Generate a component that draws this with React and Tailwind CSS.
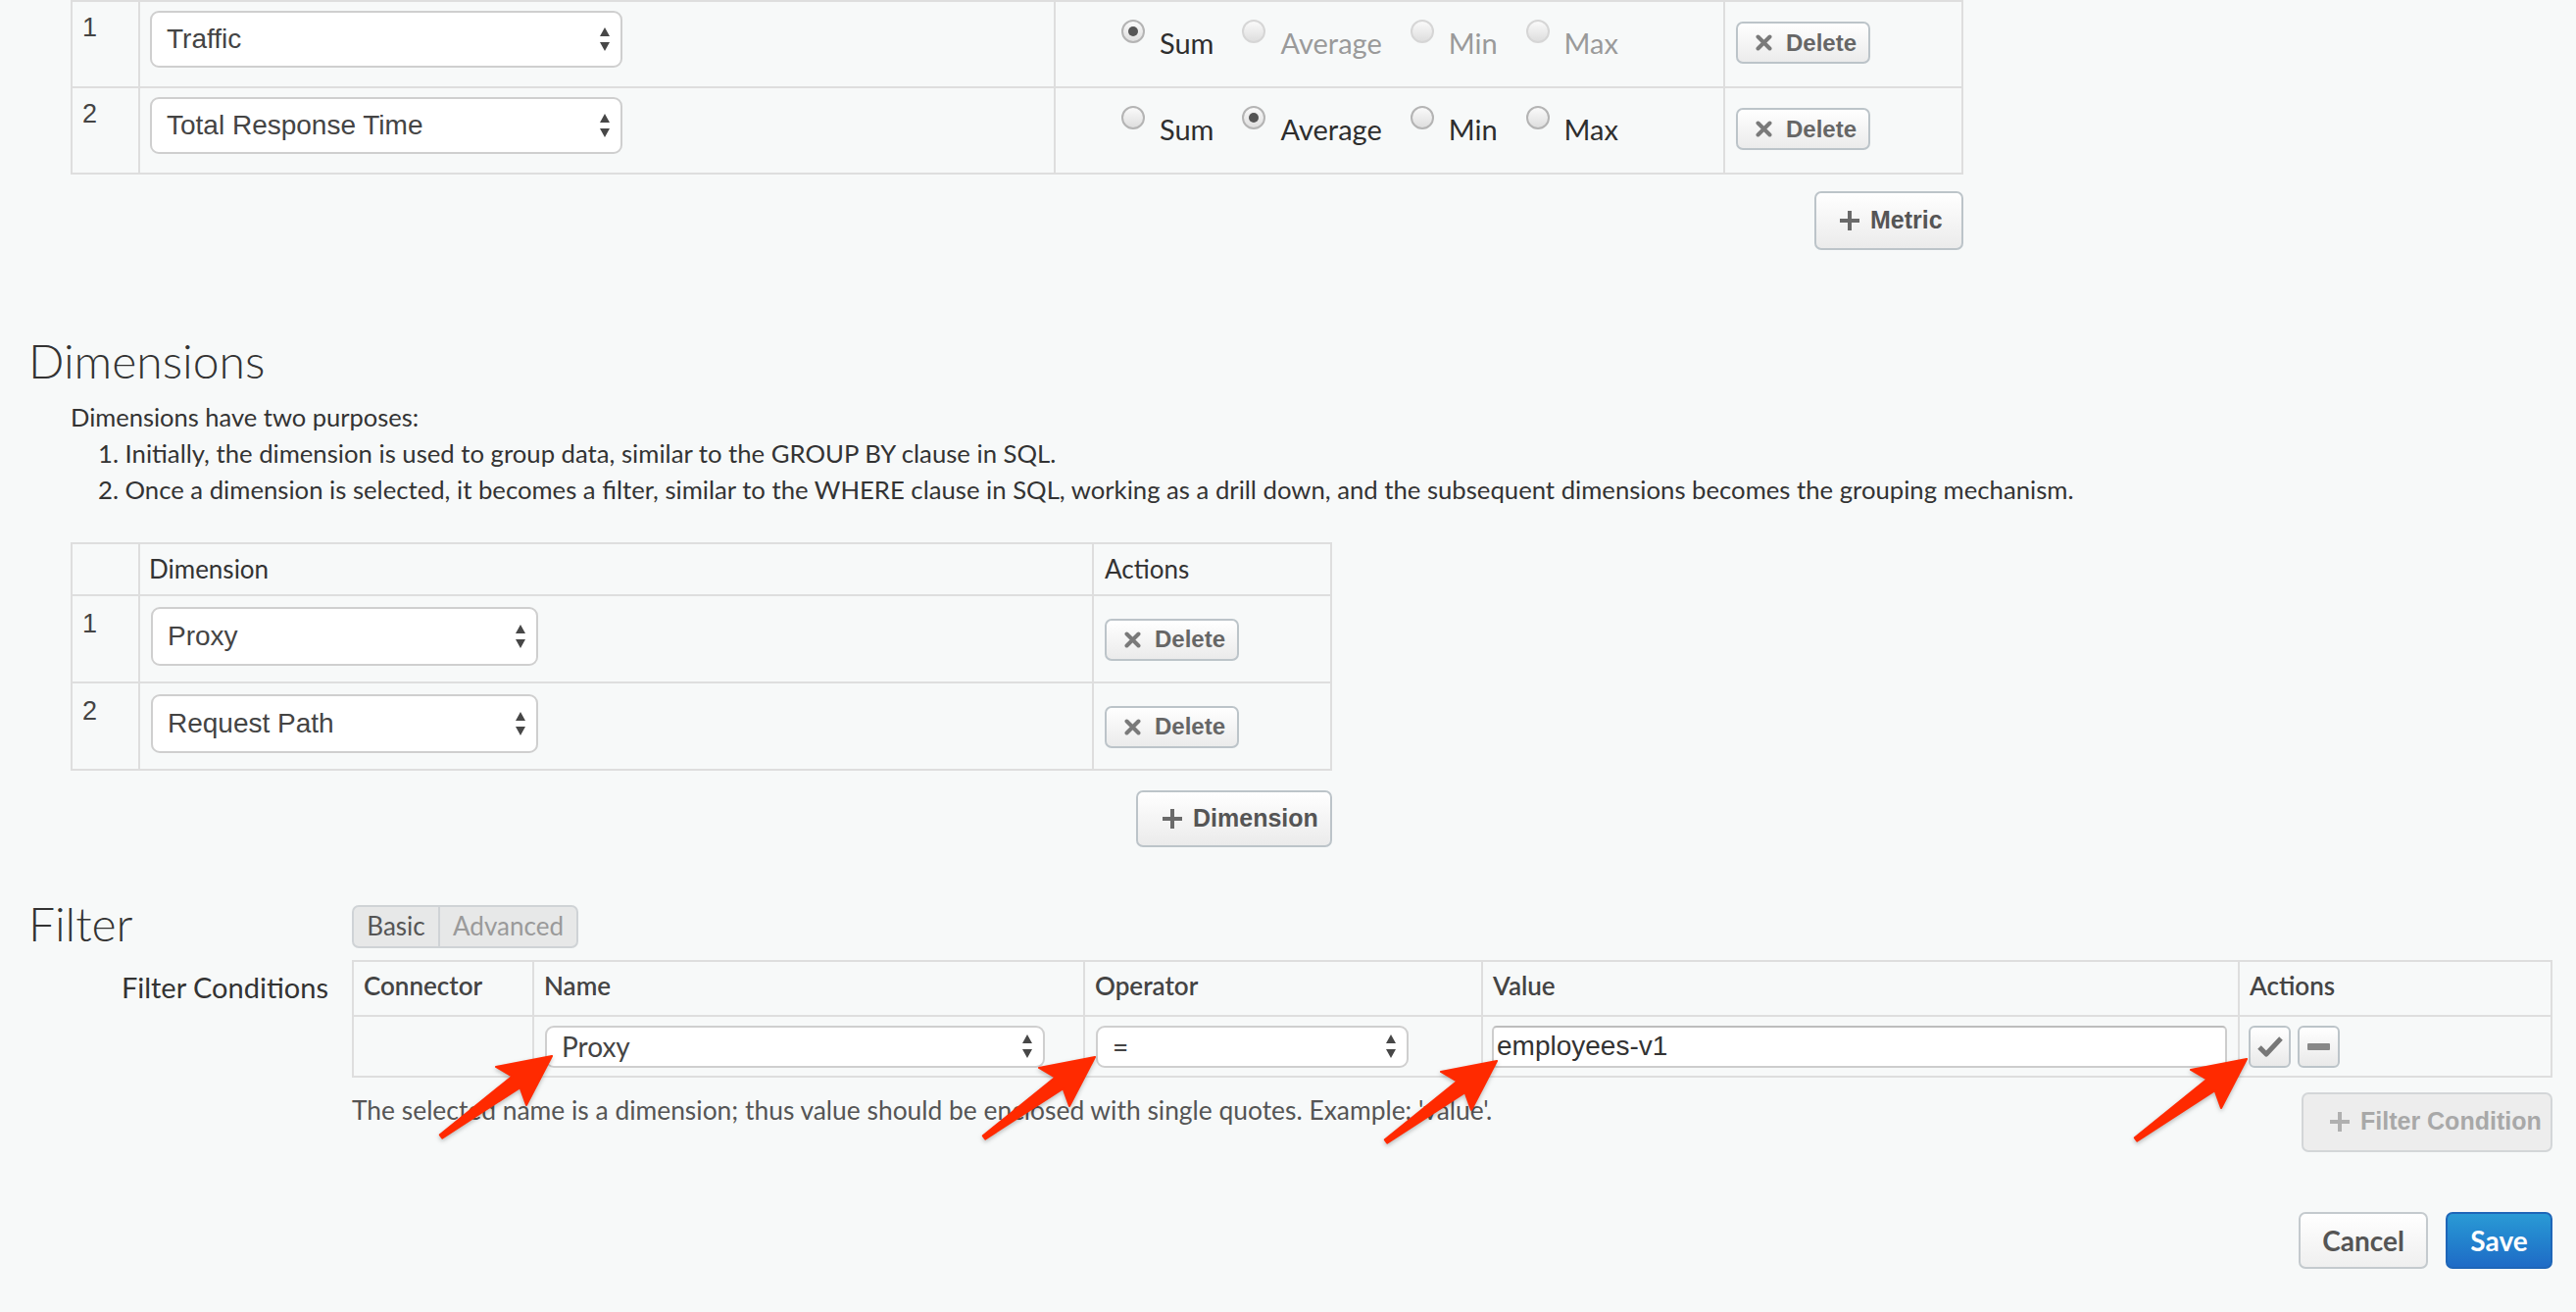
import React from "react";

function UpDown() {
  return (
    <svg width="12" height="26" viewBox="0 0 12 26" className="shrink-0">
      <path d="M6 1 L11 10 H1 Z M1 16 H11 L6 25 Z" fill="#474747" />
    </svg>
  );
}

function Select({ text, className, textClass }) {
  return (
    <div
      className={`flex items-center justify-between bg-white border-2 border-[#cfcfcf] rounded-[9px] pl-[15px] pr-[10px] ${className}`}
    >
      <span className={textClass}>{text}</span>
      <UpDown />
    </div>
  );
}

function XIcon() {
  return (
    <svg width="17" height="17" viewBox="0 0 17 17" className="shrink-0">
      <path d="M2.5 2.5 L14.5 14.5 M14.5 2.5 L2.5 14.5" stroke="#7a7a7a" strokeWidth="4" strokeLinecap="round" />
    </svg>
  );
}

function PlusIcon({ color = "#6a6a6a" }) {
  return (
    <svg width="22" height="22" viewBox="0 0 22 22" className="shrink-0">
      <path d="M11 1 V21 M1 11 H21" stroke={color} strokeWidth="4" />
    </svg>
  );
}

function DeleteBtn() {
  return (
    <button className="inline-flex items-center gap-[14px] w-[137px] h-[43px] pl-[18px] rounded-[7px] border-2 border-[#bcc4c9] bg-linear-to-b from-white to-[#ebebeb] text-[#666] font-['Liberation_Sans',Arial,sans-serif] font-bold text-[24px]">
      <XIcon />
      <span>Delete</span>
    </button>
  );
}

function Radio({ checked, disabled }) {
  return (
    <span
      className={`inline-flex shrink-0 w-[24px] h-[24px] rounded-full border-2 items-center justify-center bg-linear-to-b from-[#fafafa] to-[#dedede] ${
        disabled ? "border-[#d6d6d6]" : "border-[#b4b4b4]"
      }`}
    >
      {checked && <span className="w-[10px] h-[10px] rounded-full bg-[#555]" />}
    </span>
  );
}

function RadioGroup({ selected, disabledOthers }) {
  const items = ["Sum", "Average", "Min", "Max"];
  return (
    <div className="flex items-start gap-[29px]">
      {items.map((it) => {
        const checked = it === selected;
        const dis = disabledOthers && !checked;
        return (
          <div key={it} className="flex items-start gap-[15px]">
            <Radio checked={checked} disabled={dis} />
            <span
              className={`mt-[7px] text-[29px] leading-[1.2] ${dis ? "text-[#9a9a9a]" : "text-[#2e2e2e]"}`}
            >
              {it}
            </span>
          </div>
        );
      })}
    </div>
  );
}

function Arrow({ className }) {
  return (
    <svg
      width="126"
      height="94"
      viewBox="0 0 126 94"
      className={`absolute drop-shadow-[0_2px_2px_rgba(0,0,0,0.25)] ${className}`}
    >
      <polygon
        points="120,5 63,16 79.4,25.7 5.8,85.4 8.2,88.6 87.6,37.1 94,55"
        fill="#ff2a00"
        stroke="#ff2a00"
        strokeWidth="2"
        strokeLinejoin="round"
      />
    </svg>
  );
}

const numCls = "font-['Liberation_Sans',Arial,sans-serif] text-[27px] leading-[1.2] text-[#444]";
const selTxt = "font-['Liberation_Sans',Arial,sans-serif] text-[28px] text-[#444]";

function MetricRow({ n, name, selected, disabledOthers }) {
  return (
    <div className="grid grid-cols-[67px_934px_683px_1fr] h-[88px] border-b-2 border-[#dedede]">
      <div className={`pl-[10px] pt-[10px] ${numCls}`}>{n}</div>
      <div className="border-l-2 border-[#dedede] pl-[10px] pt-[9px]">
        <Select text={name} className="w-[482px] h-[58px]" textClass={selTxt} />
      </div>
      <div className="border-l-2 border-[#dedede] pl-[67px] pt-[18px]">
        <RadioGroup selected={selected} disabledOthers={disabledOthers} />
      </div>
      <div className="border-l-2 border-[#dedede] pl-[11px] pt-[20px]">
        <DeleteBtn />
      </div>
    </div>
  );
}

function DimRow({ n, name }) {
  return (
    <div className="grid grid-cols-[67px_973px_1fr] h-[89px] border-b-2 border-[#dedede]">
      <div className={`pl-[10px] pt-[12px] ${numCls}`}>{n}</div>
      <div className="border-l-2 border-[#dedede] pl-[11px] pt-[11px]">
        <Select text={name} className="w-[395px] h-[60px]" textClass={selTxt} />
      </div>
      <div className="border-l-2 border-[#dedede] pl-[11px] pt-[23px]">
        <DeleteBtn />
      </div>
    </div>
  );
}

export default function App() {
  const hdr = "pl-[10px] pt-[9px] text-[26px] leading-[1.2] font-semibold text-[#444]";
  return (
    <div className="relative w-[2628px] h-[1338px] overflow-hidden bg-[#f7f9f9] font-['Lato','Noto_Sans',sans-serif] text-[#333]">
      {/* Metrics table */}
      <div className="ml-[72px] w-[1931px]">
        <div className="border-t-2 border-x-2 border-[#dedede]">
          <MetricRow n="1" name="Traffic" selected="Sum" disabledOthers />
          <MetricRow n="2" name="Total Response Time" selected="Average" />
        </div>
        <div className="flex justify-end mt-[17px]">
          <button className="inline-flex items-center gap-[10px] w-[152px] h-[60px] pl-[23px] rounded-[7px] border-2 border-[#bcc4c9] bg-linear-to-b from-white to-[#ebebeb] text-[#555] font-['Liberation_Sans',Arial,sans-serif] font-bold text-[25px]">
            <PlusIcon />
            <span>Metric</span>
          </button>
        </div>
      </div>

      {/* Dimensions */}
      <h2 className="ml-[29px] mt-[84px] text-[48px] leading-[1.2] font-light text-[#333]">Dimensions</h2>
      <div className="ml-[72px] mt-[10px] leading-[37px] text-[#333]">
        <p className="text-[25.5px]">Dimensions have two purposes:</p>
        <ol className="list-decimal list-inside pl-[28px] text-[25.7px]">
          <li>Initially, the dimension is used to group data, similar to the GROUP BY clause in SQL.</li>
          <li>
            Once a dimension is selected, it becomes a filter, similar to the WHERE clause in SQL, working as a drill
            down, and the subsequent dimensions becomes the grouping mechanism.
          </li>
        </ol>
      </div>

      <div className="ml-[72px] w-[1287px] mt-[35px]">
        <div className="border-t-2 border-x-2 border-[#dedede]">
          <div className="grid grid-cols-[67px_973px_1fr] h-[53px] border-b-2 border-[#dedede]">
            <div />
            <div className="border-l-2 border-[#dedede] pl-[9px] pt-[10px] text-[26px] leading-[1.2] text-[#333]">
              Dimension
            </div>
            <div className="border-l-2 border-[#dedede] pl-[11px] pt-[10px] text-[26px] leading-[1.2] text-[#333]">
              Actions
            </div>
          </div>
          <DimRow n="1" name="Proxy" />
          <DimRow n="2" name="Request Path" />
        </div>
        <div className="flex justify-end mt-[20px]">
          <button className="inline-flex items-center gap-[10px] w-[200px] h-[58px] pl-[24px] rounded-[7px] border-2 border-[#bcc4c9] bg-linear-to-b from-white to-[#ebebeb] text-[#555] font-['Liberation_Sans',Arial,sans-serif] font-bold text-[25px]">
            <PlusIcon />
            <span>Dimension</span>
          </button>
        </div>
      </div>

      {/* Filter */}
      <div className="flex items-start mt-[56px]">
        <h2 className="w-[359px] pl-[29px] text-[48px] leading-[44px] font-light text-[#333]">Filter</h2>
        <div className="mt-[3px] flex h-[44px] rounded-[7px] border-2 border-[#cfd3d6] bg-[#e7e8e8] text-[26px]">
          <div className="w-[88px] flex items-center justify-center border-r-2 border-[#cfd3d6] text-[#555]">Basic</div>
          <div className="w-[139px] flex items-center justify-center text-[#9a9a9a]">Advanced</div>
        </div>
      </div>

      <div className="flex mt-[12px]">
        <div className="w-[335px] text-right pt-[11px] text-[29px] leading-[1.2] text-[#333]">Filter Conditions</div>
        <div className="ml-[24px] w-[2245px] border-t-2 border-x-2 border-[#dedede]">
          <div className="grid grid-cols-[182px_562px_406px_772px_1fr] h-[56px] border-b-2 border-[#dedede]">
            <div className={hdr}>Connector</div>
            <div className={`border-l-2 border-[#dedede] ${hdr}`}>Name</div>
            <div className={`border-l-2 border-[#dedede] ${hdr}`}>Operator</div>
            <div className={`border-l-2 border-[#dedede] ${hdr}`}>Value</div>
            <div className={`border-l-2 border-[#dedede] ${hdr}`}>Actions</div>
          </div>
          <div className="grid grid-cols-[182px_562px_406px_772px_1fr] h-[62px] border-b-2 border-[#dedede]">
            <div />
            <div className="border-l-2 border-[#dedede] pl-[11px] pt-[9px]">
              <Select
                text="Proxy"
                className="w-[510px] h-[43px] rounded-[8px] pl-[14px]"
                textClass="text-[28px] text-[#444]"
              />
            </div>
            <div className="border-l-2 border-[#dedede] pl-[11px] pt-[9px]">
              <Select text="=" className="w-[319px] h-[43px] rounded-[8px] pl-[14px]" textClass="text-[28px] text-[#444]" />
            </div>
            <div className="border-l-2 border-[#dedede] pl-[9px] pt-[9px]">
              <div className="w-[750px] h-[43px] flex items-center bg-white border-2 border-[#cdcdcd] border-t-[#bdbdbd] rounded-[5px] pl-[3px] font-['Liberation_Sans',Arial,sans-serif] text-[28px] text-[#333]">
                employees-v1
              </div>
            </div>
            <div className="border-l-2 border-[#dedede] pl-[9px] pt-[9px] flex items-start gap-[7px]">
              <button className="w-[43px] h-[43px] flex items-center justify-center rounded-[6px] border-2 border-[#bcc4c9] bg-linear-to-b from-white to-[#e9e9e9]">
                <svg width="28" height="22" viewBox="0 0 28 22">
                  <path d="M3 12 L10 19 L25 3" stroke="#777" strokeWidth="5" fill="none" strokeLinejoin="round" />
                </svg>
              </button>
              <button className="w-[43px] h-[43px] flex items-center justify-center rounded-[6px] border-2 border-[#bcc4c9] bg-linear-to-b from-white to-[#e9e9e9]">
                <span className="w-[23px] h-[7px] rounded-[1px] bg-[#888]" />
              </button>
            </div>
          </div>
        </div>
      </div>

      <div className="ml-[359px] w-[2245px] mt-[15px] flex items-start justify-between">
        <p className="text-[26.4px] leading-[37px] text-[#555]">
          The selected name is a dimension; thus value should be enclosed with single quotes. Example: 'value'.
        </p>
        <button className="inline-flex items-center gap-[10px] w-[256px] h-[61px] pl-[26px] rounded-[7px] border-2 border-[#d3d6d8] bg-[#ededed] text-[#a8a8a8] font-['Liberation_Sans',Arial,sans-serif] font-bold text-[25px]">
          <PlusIcon color="#b0b0b0" />
          <span>Filter Condition</span>
        </button>
      </div>

      <div className="w-[2604px] mt-[61px] flex justify-end gap-[18px]">
        <button className="w-[132px] h-[58px] rounded-[7px] border-2 border-[#c4cace] bg-linear-to-b from-white to-[#efefef] text-[28px] font-bold text-[#555]">
          Cancel
        </button>
        <button className="w-[109px] h-[58px] rounded-[7px] border-2 border-[#1e66b8] bg-linear-to-b from-[#2a9ad5] to-[#1f6bc6] text-[28px] font-bold text-white">
          Save
        </button>
      </div>

      {/* Annotation arrows */}
      <Arrow className="left-[443px] top-[1072px]" />
      <Arrow className="left-[997px] top-[1073px]" />
      <Arrow className="left-[1407px] top-[1077px]" />
      <Arrow className="left-[2172px] top-[1075px]" />
    </div>
  );
}
